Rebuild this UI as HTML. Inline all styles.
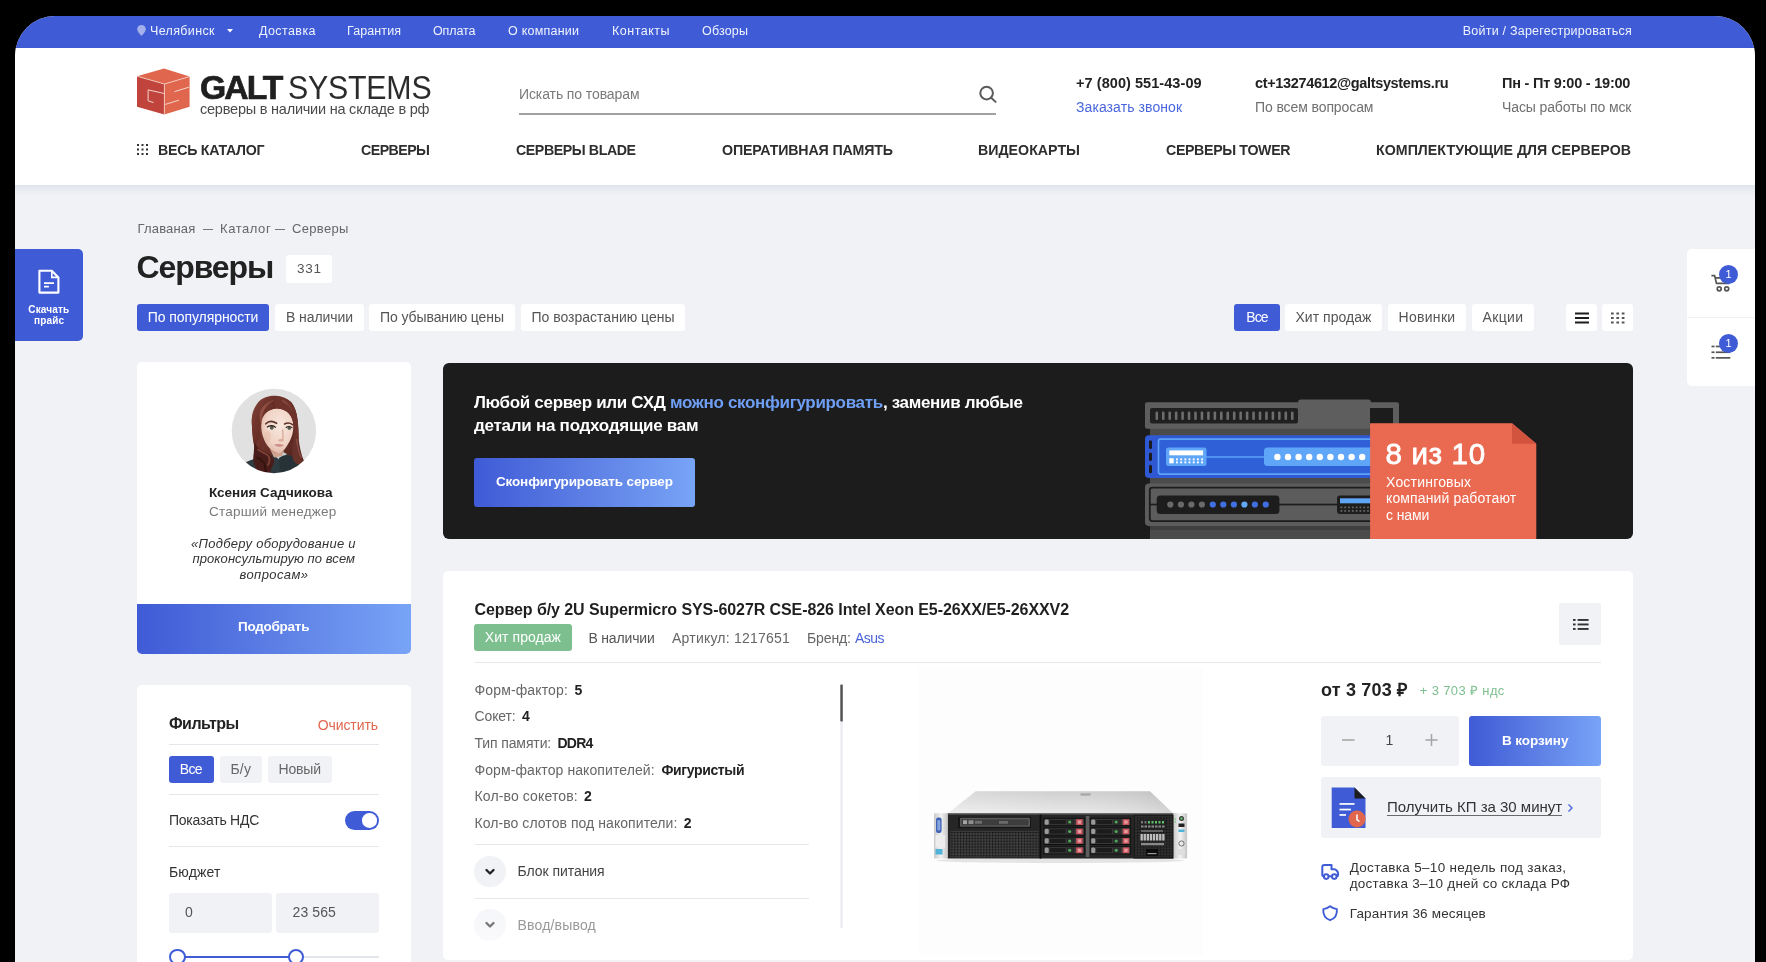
<!DOCTYPE html>
<html lang="ru">
<head>
<meta charset="utf-8">
<title>Серверы — Galt Systems</title>
<style>
*{box-sizing:border-box;margin:0;padding:0}
html,body{width:1766px;height:962px;overflow:hidden;background:#000}
body{font-family:"Liberation Sans",sans-serif;color:#222;position:relative}
#page{position:absolute;left:15px;top:16px;width:1740px;height:946px;background:#f1f2f6;border-radius:40px 40px 0 0;overflow:hidden}
#in{position:absolute;left:-15px;top:-16px;width:1766px;height:962px;will-change:transform}
.a{position:absolute}
.t{position:absolute;white-space:nowrap;line-height:1}
.b{font-weight:bold}
/* top bar */
#topbar{left:0;top:0;width:1766px;height:48px;background:#3f5cd6}
#topbar .t{color:#f0f3fd;font-size:12.5px;top:25px}
/* header */
#header{left:0;top:48px;width:1766px;height:137px;background:#fff;box-shadow:0 3px 9px rgba(50,65,130,.11)}
.nav{font-weight:bold;font-size:14.200px;letter-spacing:.6px;color:#2e2e2e;top:143px}
.hb{font-weight:bold;font-size:14.5px;color:#222;top:76px}
.hs{font-size:14px;color:#707070;top:100.200px}
/* generic */
.card{background:#fff;border-radius:5px}
.pill{position:absolute;height:27.500px;top:303.600px;background:#fff;border-radius:3px;font-size:14px;color:#555;text-align:center;line-height:27px;white-space:nowrap}
.pill.on{background:#3f5cd6;color:#fff}
.grad{background:linear-gradient(90deg,#3f5bd6 0%,#5f82e6 55%,#78a4f7 100%)}
.hr{position:absolute;height:1px;background:#e6e7ec}
/*FIT*/
#tb1{letter-spacing:0.35px}
#tb2{letter-spacing:0.40px}
#tb3{letter-spacing:0.10px}
#tb4{letter-spacing:-0.10px}
#tb5{letter-spacing:0.23px}
#tb6{letter-spacing:0.50px}
#tb7{letter-spacing:0.18px}
#tb8{letter-spacing:0.23px}
#n1{letter-spacing:-0.27px}
#n2{letter-spacing:-0.54px}
#n3{letter-spacing:-0.42px}
#n4{letter-spacing:-0.15px}
#n5{letter-spacing:0.02px}
#n6{letter-spacing:-0.35px}
#n7{letter-spacing:0.04px}
#lg1{letter-spacing:-1.93px}
#lg2{letter-spacing:-0.23px}
#lg3{letter-spacing:-0.22px}
#srch{letter-spacing:-0.10px}
#ph{letter-spacing:0.06px}
#ph2{letter-spacing:0.08px}
#em{letter-spacing:-0.35px}
#em2{letter-spacing:-0.10px}
#wh{letter-spacing:-0.22px}
#wh2{letter-spacing:-0.12px}
#ttl{letter-spacing:-1.10px}
#cnt{letter-spacing:0.73px}
#p1{letter-spacing:-0.08px}
#p2{letter-spacing:-0.08px}
#p3{letter-spacing:-0.10px}
#p4{letter-spacing:-0.00px}
#p5{letter-spacing:-0.81px}
#p6{letter-spacing:0.04px}
#p7{letter-spacing:0.28px}
#p8{letter-spacing:0.34px}
#dl1{letter-spacing:0.17px}
#dl2{letter-spacing:0.14px}
#mg1{letter-spacing:-0.02px}
#mg2{letter-spacing:0.23px}
#mg3{letter-spacing:0.29px}
#mg4{letter-spacing:0.08px}
#mg5{letter-spacing:0.42px}
#mg6{letter-spacing:-0.27px}
#bn1{letter-spacing:-0.32px}
#bn2{letter-spacing:-0.26px}
#bn3{letter-spacing:-0.15px}
#rn1{letter-spacing:0.66px}
#rn2{letter-spacing:0.20px}
#rn3{letter-spacing:0.13px}
#rn4{letter-spacing:-0.13px}
#pt{letter-spacing:-0.08px}
#pb1{letter-spacing:0.06px}
#pb2{letter-spacing:-0.16px}
#pb3{letter-spacing:0.22px}
#pb4{letter-spacing:-0.09px}
#pb5{letter-spacing:-0.58px}
#s1{letter-spacing:0.14px}
#s2{letter-spacing:-0.12px}
#s3{letter-spacing:-0.12px}
#s4{letter-spacing:0.09px}
#s5{letter-spacing:0.13px}
#s6{letter-spacing:0.06px}
#s3v{letter-spacing:-0.74px}
#s4v{letter-spacing:-0.36px}
#ac1{letter-spacing:-0.05px}
#ac2{letter-spacing:0.18px}
#pr1{letter-spacing:0.18px}
#pr2{letter-spacing:0.37px}
#cb{letter-spacing:-0.08px}
#kp{letter-spacing:-0.01px}
#dv1{letter-spacing:0.31px}
#dv2{letter-spacing:0.25px}
#gr{letter-spacing:0.16px}
#f1{letter-spacing:-0.54px}
#f2{letter-spacing:-0.08px}
#f3{letter-spacing:-0.66px}
#f4{letter-spacing:0.16px}
#f5{letter-spacing:-0.18px}
#f6{letter-spacing:-0.26px}
#f7{letter-spacing:0.13px}
#f9{letter-spacing:0.11px}
#bc1{letter-spacing:0.17px}
#bc2{letter-spacing:0.56px}
#bc3{letter-spacing:0.33px}
/*ENDFIT*/
</style>
</head>
<body>
<div id="page"><div id="in">

<!-- TOP BAR -->
<div id="topbar" class="a">
  <svg class="a" style="left:137px;top:25px" width="9" height="11" viewBox="0 0 9 11"><path d="M4.5 0C2 0 .2 1.9.2 4.2c0 2.600 2.600 4.800 4.300 6.600 1.700-1.800 4.300-4 4.300-6.600C8.800 1.900 7 0 4.500 0z" fill="#a3b0ec"/></svg>
  <span id="tb1" class="t" style="left:150px">Челябинск</span>
  <svg class="a" style="left:227px;top:29px" width="6" height="4" viewBox="0 0 6 4"><path d="M0 0h6L3 3.600z" fill="#fff"/></svg>
  <span id="tb2" class="t" style="left:259px">Доставка</span>
  <span id="tb3" class="t" style="left:347px">Гарантия</span>
  <span id="tb4" class="t" style="left:433px">Оплата</span>
  <span id="tb5" class="t" style="left:508px">О компании</span>
  <span id="tb6" class="t" style="left:612px">Контакты</span>
  <span id="tb7" class="t" style="left:702px">Обзоры</span>
  <span id="tb8" class="t" style="right:134px">Войти / Зарегестрироваться</span>
</div>

<!-- HEADER -->
<div id="header" class="a"></div>
<!-- logo -->
<svg class="a" style="left:136px;top:67px" width="55" height="49" viewBox="136 67 55 49">
  <polygon points="164,68.600 189.600,76.600 164.400,84 137,76.200" fill="#e0674e"/>
  <polygon points="137,76.200 164.400,84 164.400,114.600 137,106.800" fill="#c0443b"/>
  <polygon points="164.400,84 189.600,76.600 189.600,106.800 164.400,114.600" fill="#e0674e"/>
  <path d="M137,76.200 L164.400,84 L189.600,76.600 M164.400,84 V114.600" fill="none" stroke="#f6d5cd" stroke-width=".8"/>
  <path d="M164.400,93.500 L148.100,89.900 V100.800 L153.600,102.600" fill="none" stroke="#f6d5cd" stroke-width="1"/>
  <path d="M188.900,87.200 L174.400,91.700 M165.300,104.400 L178.900,100.200" fill="none" stroke="#f6d5cd" stroke-width="1"/>
</svg>
<span id="lg1" class="t b" style="left:200px;top:71.400px;font-size:33.700px;color:#1f1f1f;-webkit-text-stroke:.7px #1f1f1f">GALT</span>
<span id="lg2" class="t" style="left:287.500px;top:71.400px;font-size:33.700px;color:#2b2b2b;transform:scaleX(.9);transform-origin:0 0">SYSTEMS</span>
<span id="lg3" class="t" style="left:200px;top:101.900px;font-size:14.500px;color:#4a4a4a">серверы в наличии на складе в рф</span>
<!-- search -->
<span id="srch" class="t" style="left:519px;top:87px;font-size:14px;color:#7a7a7a">Искать по товарам</span>
<svg class="a" style="left:519px;top:80px" width="480" height="40" viewBox="519 80 480 40"><rect x="519" y="113.200" width="477" height="1.600" fill="#8a8a8a"/><circle cx="986.600" cy="93.100" r="6.300" fill="none" stroke="#5a5a5a" stroke-width="2"/><path d="M991.200 97.700L995.600 101.900" stroke="#5a5a5a" stroke-width="2" stroke-linecap="round"/></svg>
<!-- contacts -->
<span id="ph" class="t hb" style="left:1076px">+7 (800) 551-43-09</span>
<span id="ph2" class="t hs" style="left:1076px;color:#4a66dc">Заказать звонок</span>
<span id="em" class="t hb" style="left:1255px">ct+13274612@galtsystems.ru</span>
<span id="em2" class="t hs" style="left:1255px">По всем вопросам</span>
<span id="wh" class="t hb" style="left:1502px">Пн - Пт 9:00 - 19:00</span>
<span id="wh2" class="t hs" style="left:1502px">Часы работы по мск</span>
<!-- nav -->
<svg class="a" style="left:137px;top:144px" width="12" height="12" viewBox="0 0 12 12" fill="#333"><rect x="0" y="0" width="2" height="2"/><rect x="4.500" y="0" width="2" height="2"/><rect x="9" y="0" width="2" height="2"/><rect x="0" y="4.500" width="2" height="2"/><rect x="4.500" y="4.500" width="2" height="2"/><rect x="9" y="4.500" width="2" height="2"/><rect x="0" y="9" width="2" height="2"/><rect x="4.500" y="9" width="2" height="2"/><rect x="9" y="9" width="2" height="2"/></svg>
<span id="n1" class="t nav" style="left:158px">ВЕСЬ КАТАЛОГ</span>
<span id="n2" class="t nav" style="left:361px">СЕРВЕРЫ</span>
<span id="n3" class="t nav" style="left:516px">СЕРВЕРЫ BLADE</span>
<span id="n4" class="t nav" style="left:722px">ОПЕРАТИВНАЯ ПАМЯТЬ</span>
<span id="n5" class="t nav" style="left:978px">ВИДЕОКАРТЫ</span>
<span id="n6" class="t nav" style="left:1166px">СЕРВЕРЫ TOWER</span>
<span id="n7" class="t nav" style="left:1376px">КОМПЛЕКТУЮЩИЕ ДЛЯ СЕРВЕРОВ</span>

<!-- BREADCRUMB / TITLE / SORT -->
<span id="bc1" class="t" style="left:137.500px;top:222px;font-size:13px;color:#666">Главаная</span>
<div class="a" style="left:203px;top:228.500px;width:9.700px;height:1.200px;background:#777"></div>
<span id="bc2" class="t" style="left:220px;top:222px;font-size:13px;color:#666">Каталог</span>
<div class="a" style="left:274.900px;top:228.500px;width:10px;height:1.200px;background:#777"></div>
<span id="bc3" class="t" style="left:292px;top:222px;font-size:13px;color:#666">Серверы</span>
<span id="ttl" class="t b" style="left:136.500px;top:251.300px;font-size:32px;color:#222">Серверы</span>
<div class="a" style="left:286px;top:255px;width:46px;height:28px;background:#fff;border-radius:3px"></div>
<span id="cnt" class="t" style="left:297px;top:262px;font-size:13.500px;color:#555">331</span>

<div class="pill on" style="left:137px;width:132px"><span id="p1">По популярности</span></div>
<div class="pill" style="left:275px;width:89px"><span id="p2">В наличии</span></div>
<div class="pill" style="left:369px;width:146px"><span id="p3">По убыванию цены</span></div>
<div class="pill" style="left:521px;width:164px"><span id="p4">По возрастанию цены</span></div>

<div class="pill on" style="left:1234px;width:46px"><span id="p5">Все</span></div>
<div class="pill" style="left:1285px;width:97px"><span id="p6">Хит продаж</span></div>
<div class="pill" style="left:1388px;width:78px"><span id="p7">Новинки</span></div>
<div class="pill" style="left:1472px;width:62px"><span id="p8">Акции</span></div>
<div class="pill" style="left:1566px;width:30.500px"></div>
<div class="pill" style="left:1602px;width:30.500px"></div>
<svg class="a" style="left:1574.600px;top:311.800px" width="14" height="12" viewBox="0 0 14 12" fill="#1d1d1d"><rect x="0" y="0.500" width="14" height="2"/><rect x="0" y="5" width="14" height="2"/><rect x="0" y="9.500" width="14" height="2"/></svg>
<svg class="a" style="left:1611px;top:311.800px" width="14" height="12" viewBox="0 0 13 12" preserveAspectRatio="none" fill="#555"><rect x="0" y="0.500" width="2.500" height="2"/><rect x="5" y="0.500" width="2.500" height="2"/><rect x="10" y="0.500" width="2.500" height="2"/><rect x="0" y="5" width="2.500" height="2"/><rect x="5" y="5" width="2.500" height="2"/><rect x="10" y="5" width="2.500" height="2"/><rect x="0" y="9.500" width="2.500" height="2"/><rect x="5" y="9.500" width="2.500" height="2"/><rect x="10" y="9.500" width="2.500" height="2"/></svg>

<!-- LEFT FLOAT -->
<div class="a" style="left:15px;top:249px;width:68px;height:91.600px;background:#3f5cd6;border-radius:0 5px 5px 0"></div>
<svg class="a" style="left:36px;top:267px" width="26" height="30" viewBox="36 267 26 30"><path d="M39.400 270.800H51.800L58.400 277.400V292.600H39.400Z" fill="none" stroke="#fff" stroke-width="2.100" stroke-linejoin="round"/><path d="M51.800 271.500V277.400H57.800" fill="none" stroke="#fff" stroke-width="1.600"/><path d="M44 283.200H54M44 286.700H48.900" stroke="#fff" stroke-width="1.700"/></svg>
<span id="dl1" class="t b" style="left:28.300px;top:305px;font-size:10px;color:#fff">Скачать</span>
<span id="dl2" class="t b" style="left:34px;top:316px;font-size:10px;color:#fff">прайс</span>

<!-- RIGHT FLOAT -->
<div class="a" style="left:1687px;top:249.300px;width:68px;height:137px;background:#fff;border-radius:5px 0 0 5px"></div>
<div class="a" style="left:1687px;top:317.200px;width:68px;height:1px;background:#f1f2f6"></div>
<svg class="a" style="left:1708px;top:270px" width="26" height="24" viewBox="1708 270 26 24" fill="none" stroke="#555" stroke-width="1.700"><path d="M1711.400 275.600H1714.600L1716.500 283.400H1728.800L1730 277.800H1715.200"/><circle cx="1719.200" cy="288.800" r="2"/><circle cx="1726.700" cy="288.800" r="2"/></svg>
<div class="a" style="left:1719px;top:265px;width:19px;height:19px;border-radius:50%;background:#3f5cd6"></div>
<span class="t" style="left:1725.500px;top:269px;font-size:11px;color:#fff">1</span>
<svg class="a" style="left:1710px;top:344px" width="22" height="16" viewBox="1710 344 22 16" fill="#555"><rect x="1711.500" y="345.600" width="3" height="1.700"/><rect x="1715.800" y="345.600" width="14.500" height="1.700"/><rect x="1711.500" y="351.400" width="3" height="1.700"/><rect x="1715.800" y="351.400" width="14.500" height="1.700"/><rect x="1711.500" y="357" width="3" height="1.700"/><rect x="1715.800" y="357" width="14.500" height="1.700"/></svg>
<div class="a" style="left:1719px;top:334px;width:19px;height:19px;border-radius:50%;background:#3f5cd6"></div>
<span class="t" style="left:1725.500px;top:338px;font-size:11px;color:#fff">1</span>

<!-- MANAGER CARD -->
<div class="a card" style="left:137px;top:362px;width:274px;height:292px;overflow:hidden">
  <div class="a grad" style="left:0;top:242px;width:274px;height:50px"></div>
</div>
<svg class="a" style="left:224px;top:382px" width="100" height="100" viewBox="0 0 100 100">
  <defs>
    <clipPath id="avc"><circle cx="49.900" cy="49" r="42.200"/></clipPath>
    <filter id="avb" x="-10%" y="-10%" width="120%" height="120%"><feGaussianBlur stdDeviation=".75"/></filter>
    <radialGradient id="skin" cx=".58" cy=".38" r=".75"><stop offset="0" stop-color="#f8e6dc"/><stop offset=".6" stop-color="#f0d3c5"/><stop offset="1" stop-color="#d7a896"/></radialGradient>
    <linearGradient id="hair" x1="0" y1="0" x2="1" y2="1"><stop offset="0" stop-color="#83443a"/><stop offset=".45" stop-color="#6a3029"/><stop offset="1" stop-color="#4c211d"/></linearGradient>
  </defs>
  <circle cx="49.900" cy="49" r="42.200" fill="#e1e1e1"/>
  <g clip-path="url(#avc)"><g filter="url(#avb)">
    <!-- hair mass -->
    <path d="M53.500 14C46 13 38 15.500 34 20.500 29 27 27.500 33 27.800 40 28 46 28.200 50 28.500 54 29 60 30.500 64 30.600 68 30 72 29 76 29.500 79 31 84 38 88 44 92H62C68 90 76 84 79.800 78.700 77 72 75.500 64 74.700 58 74.500 50 74.500 44 73.500 37.500 72.500 30 70.500 24 67.300 20.300 63.500 16.500 58.500 14.500 53.500 14Z" fill="url(#hair)"/>
    <!-- clothing -->
    <path d="M20 81C28 77 38 74 48 73L56 70 66 74C72 77 76 80 79 84L70 94H28Z" fill="#2f3b40"/>
    <path d="M49 73L57 69 63 72 56 78Z" fill="#c9cdcd"/>
    <path d="M55 76C60 72 66 72 71 76L75 82 68 92H56Z" fill="#273339"/>
    <!-- face -->
    <path d="M52.400 26.600C45 26.800 39.500 31 37.500 39.800 36.800 45 37.500 49.500 38.600 53.500 40 58.500 42.500 62.800 45.500 66 48 69 51.500 71.500 54.700 71.200 58.500 70.500 61.500 66.800 63.800 62.600 66.500 58 68.500 53.500 69 49 69.600 45 69.400 41 68.400 37.500 66 30.500 60 26.500 52.400 26.600Z" fill="url(#skin)"/>
    <path d="M45.500 66C48 69 51.500 71.500 54.700 71.200 57 70.800 59 69.300 60.500 67.500L58 74 50 75.500Z" fill="#d2a28f"/>
    <!-- front hair, with centre part -->
    <path d="M53.500 14C45 13.500 37 17 33 23 29 29 27.500 36 27.800 42 28.200 50 29.500 58 30.600 66 32.500 62 34.500 58.500 36.500 55 35.500 49.500 35.500 44 37 39 39 32.500 44 27.500 52.400 26.600 50.500 22 51 18 53.500 14Z" fill="url(#hair)"/>
    <path d="M53.500 14C58 14.500 63.500 17 67.300 20.300 71 25 73 31 73.500 37.500 74.300 44 74.500 51 74.700 58 73.500 62 71.500 65 69 67 70.200 61 70.400 55 69.800 49 69.800 43 69 38.500 67 34.500 64 29.500 59 26.800 52.400 26.600 52 22.500 52.300 18 53.500 14Z" fill="#6d322a"/>
    <path d="M36 30C38.500 23.500 44 19 51 17.500 45 20.500 41 25 39 31 37.800 35 37.300 39 37.500 43 35.800 39 35.300 34.500 36 30Z" fill="#9a5a4b" opacity=".75"/>
    <path d="M58 17.500C63 19.500 67 24 69 30 67 26 63.500 22 58.500 20Z" fill="#96564a" opacity=".6"/>
    <!-- curls -->
    <path d="M30.600 60C32 64 35 67 39 69 43 71 47.500 72.500 49.500 76 51 80 49 84 47 87 46 89.500 47 91 49 92.500H38C33 89 30 84 29.500 78.700 29.300 72 30.300 66 30.600 60Z" fill="#4a1f1b"/>
    <path d="M33.500 67C36.500 70 41.500 71 44.500 74 46.500 77 45.500 80.500 43.500 83.500" stroke="#8b4a3c" stroke-width="1.700" fill="none" opacity=".85"/>
    <path d="M32.500 75C35.500 77 38.500 78.500 40.500 81.500 41.500 84.500 40.500 87.500 42.500 90.500" stroke="#2a0f0c" stroke-width="1.900" fill="none" opacity=".8"/>
    <path d="M71 46C72.500 56 73.500 66 76 73 77.500 77 79 79 79.500 80.500 75.500 83.500 71.500 82.500 69.500 78.500 67.500 72.500 68 64.500 69.500 57Z" fill="#66302a"/>
    <path d="M72.500 57C73.500 64 74.500 70 77.500 76" stroke="#9a5c4e" stroke-width="1.400" fill="none" opacity=".7"/>
    <!-- brows & eyes -->
    <path d="M41.800 41.800C44.500 39 48.500 38.800 52.600 41.300" stroke="#5b3329" stroke-width="1.600" fill="none" stroke-linecap="round"/>
    <path d="M60.600 42C63 40.600 66 40.800 68.600 42.600" stroke="#5b3329" stroke-width="1.500" fill="none" stroke-linecap="round"/>
    <ellipse cx="47.300" cy="45.700" rx="4" ry="2" fill="#f2ebe6"/>
    <ellipse cx="65" cy="46.200" rx="3.200" ry="1.800" fill="#f2ebe6"/>
    <circle cx="47.800" cy="45.700" r="2" fill="#5a5a4c"/>
    <circle cx="65.300" cy="46.200" r="1.800" fill="#5a5a4c"/>
    <path d="M43 45.300C45.500 43 49.500 43 51.800 45.600" stroke="#2e1d18" stroke-width="1.200" fill="none"/>
    <path d="M61.800 45.800C63.600 44 66.600 44 68.400 46" stroke="#2e1d18" stroke-width="1.100" fill="none"/>
    <!-- nose -->
    <path d="M58.600 47.500C59 51.500 59.400 55 58.600 58" stroke="#d7aa98" stroke-width="1.300" fill="none"/>
    <ellipse cx="57" cy="58.300" rx="3" ry="1.400" fill="#dcae9c"/>
    <!-- lips -->
    <path d="M50.200 62.800C52.500 61.600 56 61.800 60.200 63 58 65.400 53 65.600 50.200 62.800Z" fill="#cd8d86"/>
    <ellipse cx="43.500" cy="55" rx="3.500" ry="6" fill="#e4bcaa" opacity=".55"/>
  </g></g>
</svg>
<span id="mg1" class="t b" style="left:209px;top:485.500px;font-size:13.500px;color:#222">Ксения Садчикова</span>
<span id="mg2" class="t" style="left:209px;top:504.500px;font-size:13.500px;color:#7a7a7a">Старший менеджер</span>
<span id="mg3" class="t" style="left:191px;top:536.500px;font-size:13px;font-style:italic;color:#333">«Подберу оборудование и</span>
<span id="mg4" class="t" style="left:192.500px;top:552px;font-size:13px;font-style:italic;color:#333">проконсультирую по всем</span>
<span id="mg5" class="t" style="left:239.500px;top:568px;font-size:13px;font-style:italic;color:#333">вопросам»</span>
<span id="mg6" class="t b" style="left:238px;top:620px;font-size:13.500px;color:#fff">Подобрать</span>

<!-- BANNER -->
<div class="a" style="left:443px;top:363px;width:1190px;height:176px;background:#1c1c1c;border-radius:6px;overflow:hidden" id="banner"></div>
<span id="bn1" class="t b" style="left:474px;top:393.500px;font-size:17px;color:#fff">Любой сервер или СХД <span style="color:#6f9ff5">можно сконфигурировать</span>, заменив любые</span>
<span id="bn2" class="t b" style="left:474px;top:417px;font-size:17px;color:#fff">детали на подходящие вам</span>
<div class="a grad" style="left:474px;top:457.500px;width:221px;height:49.500px;border-radius:3px"></div>
<span id="bn3" class="t b" style="left:496px;top:475.200px;font-size:13.500px;color:#fff">Сконфигурировать сервер</span>

<svg class="a" style="left:1140px;top:363.500px" width="493" height="175" viewBox="1140 363.500 493 175">
  <defs><clipPath id="bnc"><rect x="1140" y="363.500" width="493" height="175"/></clipPath></defs>
  <g clip-path="url(#bnc)">
  <!-- base -->
  <rect x="1150" y="425" width="221" height="120" fill="#4b4b4b"/>
  <rect x="1150" y="525.500" width="221" height="4" fill="#3f3f3f"/>
  <!-- top unit -->
  <rect x="1298" y="399" width="73" height="10" rx="3" fill="#5e5e5e"/>
  <rect x="1145" y="401.800" width="254" height="26.500" rx="2" fill="#5e5e5e"/>
  <rect x="1150" y="407.500" width="148" height="15.500" rx="2" fill="#202020"/>
  <rect x="1155.50" y="411" width="2.600" height="8.500" rx="1.200" fill="#6d6d6d"/><rect x="1161.95" y="411" width="2.600" height="8.500" rx="1.200" fill="#6d6d6d"/><rect x="1168.40" y="411" width="2.600" height="8.500" rx="1.200" fill="#6d6d6d"/><rect x="1174.85" y="411" width="2.600" height="8.500" rx="1.200" fill="#6d6d6d"/><rect x="1181.30" y="411" width="2.600" height="8.500" rx="1.200" fill="#6d6d6d"/><rect x="1187.75" y="411" width="2.600" height="8.500" rx="1.200" fill="#6d6d6d"/><rect x="1194.20" y="411" width="2.600" height="8.500" rx="1.200" fill="#6d6d6d"/><rect x="1200.65" y="411" width="2.600" height="8.500" rx="1.200" fill="#6d6d6d"/><rect x="1207.10" y="411" width="2.600" height="8.500" rx="1.200" fill="#6d6d6d"/><rect x="1213.55" y="411" width="2.600" height="8.500" rx="1.200" fill="#6d6d6d"/><rect x="1220.00" y="411" width="2.600" height="8.500" rx="1.200" fill="#6d6d6d"/><rect x="1226.45" y="411" width="2.600" height="8.500" rx="1.200" fill="#6d6d6d"/><rect x="1232.90" y="411" width="2.600" height="8.500" rx="1.200" fill="#6d6d6d"/><rect x="1239.35" y="411" width="2.600" height="8.500" rx="1.200" fill="#6d6d6d"/><rect x="1245.80" y="411" width="2.600" height="8.500" rx="1.200" fill="#6d6d6d"/><rect x="1252.25" y="411" width="2.600" height="8.500" rx="1.200" fill="#6d6d6d"/><rect x="1258.70" y="411" width="2.600" height="8.500" rx="1.200" fill="#6d6d6d"/><rect x="1265.15" y="411" width="2.600" height="8.500" rx="1.200" fill="#6d6d6d"/><rect x="1271.60" y="411" width="2.600" height="8.500" rx="1.200" fill="#6d6d6d"/><rect x="1278.05" y="411" width="2.600" height="8.500" rx="1.200" fill="#6d6d6d"/><rect x="1284.50" y="411" width="2.600" height="8.500" rx="1.200" fill="#6d6d6d"/><rect x="1290.95" y="411" width="2.600" height="8.500" rx="1.200" fill="#6d6d6d"/>
  <rect x="1370" y="407.500" width="23" height="16" fill="#1c1c1c"/>
  <!-- blue unit -->
  <rect x="1145" y="434.700" width="240" height="42.800" rx="4" fill="#2f59d4"/>
  <rect x="1149" y="439.800" width="3" height="8.600" rx="1.500" fill="#1b1b1b"/><rect x="1149" y="452" width="3" height="8.600" rx="1.500" fill="#1b1b1b"/><rect x="1149" y="464.200" width="3" height="8.600" rx="1.500" fill="#1b1b1b"/>
  <rect x="1158.500" y="438.600" width="230" height="35" rx="2" fill="#3060d8" stroke="#5fa3f8" stroke-width="1.600"/>
  <rect x="1166" y="447" width="40.500" height="18.500" rx="2.500" fill="#5fa6f8"/>
  <rect x="1169.300" y="449.900" width="33.800" height="4.900" fill="#fff"/>
  <rect x="1169.300" y="457.700" width="4.400" height="5.100" fill="#fff"/>
  <rect x="1176.00" y="457.9" width="1.900" height="1.900" fill="#fff"/><rect x="1176.00" y="460.9" width="1.900" height="1.900" fill="#fff"/><rect x="1180.19" y="457.9" width="1.900" height="1.900" fill="#fff"/><rect x="1180.19" y="460.9" width="1.900" height="1.900" fill="#fff"/><rect x="1184.38" y="457.9" width="1.900" height="1.900" fill="#fff"/><rect x="1184.38" y="460.9" width="1.900" height="1.900" fill="#fff"/><rect x="1188.57" y="457.9" width="1.900" height="1.900" fill="#fff"/><rect x="1188.57" y="460.9" width="1.900" height="1.900" fill="#fff"/><rect x="1192.76" y="457.9" width="1.900" height="1.900" fill="#fff"/><rect x="1192.76" y="460.9" width="1.900" height="1.900" fill="#fff"/><rect x="1196.95" y="457.9" width="1.900" height="1.900" fill="#fff"/><rect x="1196.95" y="460.9" width="1.900" height="1.900" fill="#fff"/><rect x="1201.14" y="457.9" width="1.900" height="1.900" fill="#fff"/><rect x="1201.14" y="460.9" width="1.900" height="1.900" fill="#fff"/>
  <rect x="1206" y="455.800" width="58" height="1.400" fill="#5fa6f8"/>
  <rect x="1264" y="447" width="120" height="18.500" rx="3.500" fill="#5fa6f8"/>
  <circle cx="1277.4" cy="456.500" r="3.200" fill="#fff"/><circle cx="1288.0" cy="456.500" r="3.200" fill="#fff"/><circle cx="1298.6" cy="456.500" r="3.200" fill="#fff"/><circle cx="1309.2" cy="456.500" r="3.200" fill="#fff"/><circle cx="1319.8" cy="456.500" r="3.200" fill="#fff"/><circle cx="1330.4" cy="456.500" r="3.200" fill="#fff"/><circle cx="1341.0" cy="456.500" r="3.200" fill="#fff"/><circle cx="1351.6" cy="456.500" r="3.200" fill="#fff"/><circle cx="1362.2" cy="456.500" r="3.200" fill="#fff"/>
  <!-- dark unit -->
  <rect x="1145" y="483" width="240" height="42.500" rx="4" fill="#5c5c5c"/>
  <rect x="1149.800" y="487.200" width="236" height="33.400" rx="2.500" fill="none" stroke="#1c1c1c" stroke-width="1.800"/>
  <rect x="1150" y="503.200" width="200" height="1.700" fill="#1c1c1c"/>
  <rect x="1156.700" y="495" width="122.700" height="18.600" rx="3.500" fill="#1d1d1d"/>
  <circle cx="1170.3" cy="504" r="3.100" fill="#6a6a6a"/><circle cx="1180.9" cy="504" r="3.100" fill="#6a6a6a"/><circle cx="1191.4" cy="504" r="3.100" fill="#6a6a6a"/><circle cx="1201.9" cy="504" r="3.100" fill="#6a6a6a"/><circle cx="1212.8" cy="504" r="3.100" fill="#3f6fe0"/><circle cx="1223.3" cy="504" r="3.100" fill="#3f6fe0"/><circle cx="1233.9" cy="504" r="3.100" fill="#3f6fe0"/><circle cx="1244.4" cy="504" r="3.100" fill="#62a6f7"/><circle cx="1254.9" cy="504" r="3.100" fill="#3f6fe0"/><circle cx="1265.8" cy="504" r="3.100" fill="#3f6fe0"/>
  <rect x="1337" y="495" width="40" height="18.600" rx="3" fill="#1d1d1d"/>
  <rect x="1340" y="497.800" width="35" height="5" fill="#5fa6f8"/>
  <rect x="1340.5" y="506" width="1.800" height="1.800" fill="#666"/><rect x="1340.5" y="509.5" width="1.800" height="1.800" fill="#666"/><rect x="1344.3" y="506" width="1.800" height="1.800" fill="#666"/><rect x="1344.3" y="509.5" width="1.800" height="1.800" fill="#666"/><rect x="1348.1" y="506" width="1.800" height="1.800" fill="#666"/><rect x="1348.1" y="509.5" width="1.800" height="1.800" fill="#666"/><rect x="1351.9" y="506" width="1.800" height="1.800" fill="#666"/><rect x="1351.9" y="509.5" width="1.800" height="1.800" fill="#666"/><rect x="1355.7" y="506" width="1.800" height="1.800" fill="#666"/><rect x="1355.7" y="509.5" width="1.800" height="1.800" fill="#666"/><rect x="1359.5" y="506" width="1.800" height="1.800" fill="#666"/><rect x="1359.5" y="509.5" width="1.800" height="1.800" fill="#666"/><rect x="1363.3" y="506" width="1.800" height="1.800" fill="#666"/><rect x="1363.3" y="509.5" width="1.800" height="1.800" fill="#666"/><rect x="1367.1" y="506" width="1.800" height="1.800" fill="#666"/><rect x="1367.1" y="509.5" width="1.800" height="1.800" fill="#666"/>
  <!-- red note -->
  <polygon points="1370.100,422.700 1512,422.700 1536.300,443.300 1536.300,540 1370.100,540" fill="#ea6a51"/>
  <polygon points="1512,422.700 1536.300,443.300 1512,443.300" fill="#d2543f"/>
  </g>
</svg>
<span id="rn1" class="t" style="left:1385.500px;top:438.600px;font-size:29.500px;color:#fff;-webkit-text-stroke:.8px #fff">8 из 10</span>
<span id="rn2" class="t" style="left:1386px;top:475px;font-size:14px;color:#fff">Хостинговых</span>
<span id="rn3" class="t" style="left:1386px;top:491px;font-size:14px;color:#fff">компаний работают</span>
<span id="rn4" class="t" style="left:1386px;top:507.500px;font-size:14px;color:#fff">с нами</span>

<!-- PRODUCT CARD -->
<div class="a card" style="left:443px;top:571px;width:1190px;height:389px"></div>
<span id="pt" class="t b" style="left:474.500px;top:601.700px;font-size:16px;color:#1f1f1f">Сервер б/у 2U Supermicro SYS-6027R CSE-826 Intel Xeon E5-26XX/E5-26XXV2</span>
<div class="a" style="left:474px;top:624px;width:98px;height:27px;background:#7dbf8f;border-radius:3px"></div>
<span id="pb1" class="t" style="left:484.800px;top:630px;font-size:14px;color:#fff">Хит продаж</span>
<span id="pb2" class="t" style="left:588.400px;top:631px;font-size:14px;color:#555">В наличии</span>
<span id="pb3" class="t" style="left:672px;top:631px;font-size:14px;color:#666">Артикул: 1217651</span>
<span id="pb4" class="t" style="left:806.900px;top:631px;font-size:14px;color:#666">Бренд:</span>
<span id="pb5" class="t" style="left:855px;top:631px;font-size:14px;color:#4a63d9">Asus</span>
<div class="hr" style="left:474.500px;top:662px;width:1126.500px"></div>
<span id="s1" class="t" style="left:474.500px;top:683.2px;font-size:14px;color:#666">Форм-фактор:</span><span id="s1v" class="t b" style="left:574.5px;top:683.2px;font-size:14px;color:#222">5</span>
<span id="s2" class="t" style="left:474.500px;top:709.3px;font-size:14px;color:#666">Сокет:</span><span id="s2v" class="t b" style="left:522px;top:709.3px;font-size:14px;color:#222">4</span>
<span id="s3" class="t" style="left:474.500px;top:735.8px;font-size:14px;color:#666">Тип памяти:</span><span id="s3v" class="t b" style="left:557.4px;top:735.8px;font-size:14px;color:#222">DDR4</span>
<span id="s4" class="t" style="left:474.500px;top:762.7px;font-size:14px;color:#666">Форм-фактор накопителей:</span><span id="s4v" class="t b" style="left:661.4px;top:762.7px;font-size:14px;color:#222">Фигуристый</span>
<span id="s5" class="t" style="left:474.500px;top:789.2px;font-size:14px;color:#666">Кол-во сокетов:</span><span id="s5v" class="t b" style="left:583.9px;top:789.2px;font-size:14px;color:#222">2</span>
<span id="s6" class="t" style="left:474.500px;top:815.7px;font-size:14px;color:#666">Кол-во слотов под накопители:</span><span id="s6v" class="t b" style="left:683.8px;top:815.7px;font-size:14px;color:#222">2</span>

<div class="hr" style="left:474.500px;top:843.500px;width:334.500px"></div>
<div class="a" style="left:474.400px;top:855.600px;width:31.400px;height:31.400px;border-radius:50%;background:#f1f2f6"></div>
<svg class="a" style="left:485px;top:867.500px" width="10" height="8" viewBox="0 0 10 8"><path d="M1.500 2L5 5.500 8.500 2" fill="none" stroke="#222" stroke-width="2.300" stroke-linecap="round" stroke-linejoin="round"/></svg>
<span id="ac1" class="t" style="left:517.500px;top:864px;font-size:14px;color:#444">Блок питания</span>
<div class="hr" style="left:474.500px;top:897.700px;width:334.500px"></div>
<div class="a" style="left:474.400px;top:909.300px;width:31.400px;height:31.400px;border-radius:50%;background:linear-gradient(#f5f6f9,#fafafc)"></div>
<svg class="a" style="left:485px;top:921.200px" width="10" height="8" viewBox="0 0 10 8"><path d="M1.500 2L5 5.500 8.500 2" fill="none" stroke="#777" stroke-width="2.300" stroke-linecap="round" stroke-linejoin="round"/></svg>
<span id="ac2" class="t" style="left:517.500px;top:917.700px;font-size:14px;color:#999">Ввод/вывод</span>
<svg class="a" style="left:838px;top:680px" width="8" height="252" viewBox="838 680 8 252"><rect x="840.300" y="685" width="2.500" height="243" fill="#ecedf2"/><rect x="840.300" y="684.600" width="2.500" height="37" rx=".8" fill="#555"/></svg>

<!-- product image -->
<div class="a" style="left:917.700px;top:667.800px;width:285px;height:287.200px;background:#fdfdfd"></div>
<svg id="srv" class="a" style="left:930px;top:785px" width="262" height="82" viewBox="930 785 262 82"><defs><linearGradient id="tg" x1="0" y1="0" x2="0" y2="1"><stop offset="0" stop-color="#cfcfcf"/><stop offset="1" stop-color="#e9e9e9"/></linearGradient><linearGradient id="eg" x1="0" y1="0" x2="1" y2="0"><stop offset="0" stop-color="#c9c9c9"/><stop offset=".5" stop-color="#f2f2f2"/><stop offset="1" stop-color="#c4c4c4"/></linearGradient><pattern id="vent" x="950.400" y="831" width="2.900" height="2.900" patternUnits="userSpaceOnUse"><rect width="2.900" height="2.900" fill="#505050"/><rect x=".5" y=".5" width="2" height="2" fill="#0e0e0e"/></pattern><linearGradient id="tg2" x1="0" y1="0" x2="1" y2="0"><stop offset="0" stop-color="#fff" stop-opacity=".25"/><stop offset=".5" stop-color="#fff" stop-opacity="0"/><stop offset="1" stop-color="#000" stop-opacity=".08"/></linearGradient><filter id="sb" x="-2%" y="-5%" width="104%" height="110%"><feGaussianBlur stdDeviation=".45"/></filter></defs><g filter="url(#sb)"><ellipse cx="1060" cy="860.500" rx="124" ry="2.500" fill="#e4e4e4"/><polygon points="975.700,791.200 1150,791.200 1173.500,813.800 947.500,813.800" fill="url(#tg)"/><polygon points="975.700,791.200 1150,791.200 1173.500,813.800 947.500,813.800" fill="url(#tg2)"/><rect x="1080.500" y="793.300" width="10" height="2.400" fill="#a9a9a9"/><rect x="947.500" y="813.500" width="226" height="45" fill="#262626"/><rect x="947.500" y="813.500" width="226" height="1.200" fill="#555"/><rect x="934" y="813.200" width="13.800" height="45.400" rx="1" fill="url(#eg)"/><rect x="1173.300" y="813.200" width="13.800" height="45.400" rx="1" fill="url(#eg)"/><rect x="936" y="817.500" width="5.600" height="15.500" rx="2.200" fill="#3f63b5"/><rect x="937.300" y="820" width="3" height="10.500" rx="1.300" fill="#86a4de"/><rect x="935.500" y="849" width="7" height="5.500" fill="#4fb3d9"/><rect x="935.500" y="835" width="9.500" height="12.500" fill="#ededed"/><circle cx="1181.500" cy="818.500" r="2.500" fill="#3a3a3a"/><circle cx="1181.500" cy="818.500" r="1.200" fill="#61c36a"/><rect x="1178.500" y="823.500" width="6" height="3.500" fill="#222"/><rect x="1178.500" y="829.500" width="6" height="2.500" fill="#4fb3d9"/><circle cx="1181.500" cy="843.500" r="2.600" fill="none" stroke="#555" stroke-width=".8"/><rect x="1178" y="849" width="7" height="6" fill="#dedede"/><circle cx="1175.300" cy="819" r=".7" fill="#61c36a"/><circle cx="1175.300" cy="822" r=".7" fill="#61c36a"/><rect x="958" y="816.800" width="73" height="11.500" rx="1" fill="#141414"/><rect x="960" y="817.800" width="70" height="9" rx=".8" fill="#5a5a5a"/><rect x="961.500" y="819.300" width="67" height="6" fill="#3c3c3c"/><rect x="963" y="820.300" width="4" height="3.800" fill="#a5a5a5"/><rect x="968.500" y="820.300" width="5" height="3.800" fill="#8d8d8d"/><rect x="975" y="820.800" width="7" height="3" fill="#6d6d6d"/><rect x="999" y="821" width="9" height="2.800" fill="#6a6a6a"/><rect x="950.400" y="831" width="88.600" height="26.200" fill="url(#vent)"/><rect x="1039.500" y="814.700" width="2" height="43.800" fill="#0f0f0f"/><rect x="1043.2" y="817.9" width="42" height="8.300" fill="#111"/><rect x="1044.2" y="818.9" width="40" height="6.300" fill="#3b3b3b"/><rect x="1044.7" y="819.4" width="4" height="5.300" rx="1.500" fill="#9a9a9a"/><rect x="1049.7" y="819.9" width="16" height="4.300" fill="#1c1c1c"/><rect x="1066.7" y="819.4" width="8" height="5.300" fill="#2b2b2b"/><circle cx="1069.7" cy="822.1" r="1.500" fill="#4fae5c"/><rect x="1076.2" y="819.1999999999999" width="6.500" height="5.800" fill="#c9545d"/><rect x="1077.8" y="820.5" width="3.300" height="3.200" fill="#e79aa0"/><rect x="1043.2" y="827.3" width="42" height="8.300" fill="#111"/><rect x="1044.2" y="828.3" width="40" height="6.300" fill="#3b3b3b"/><rect x="1044.7" y="828.8" width="4" height="5.300" rx="1.500" fill="#9a9a9a"/><rect x="1049.7" y="829.3" width="16" height="4.300" fill="#1c1c1c"/><rect x="1066.7" y="828.8" width="8" height="5.300" fill="#2b2b2b"/><circle cx="1069.7" cy="831.5" r="1.500" fill="#4fae5c"/><rect x="1076.2" y="828.5999999999999" width="6.500" height="5.800" fill="#c9545d"/><rect x="1077.8" y="829.9" width="3.300" height="3.200" fill="#e79aa0"/><rect x="1043.2" y="836.7" width="42" height="8.300" fill="#111"/><rect x="1044.2" y="837.7" width="40" height="6.300" fill="#3b3b3b"/><rect x="1044.7" y="838.2" width="4" height="5.300" rx="1.500" fill="#9a9a9a"/><rect x="1049.7" y="838.7" width="16" height="4.300" fill="#1c1c1c"/><rect x="1066.7" y="838.2" width="8" height="5.300" fill="#2b2b2b"/><circle cx="1069.7" cy="840.9000000000001" r="1.500" fill="#4fae5c"/><rect x="1076.2" y="838.0" width="6.500" height="5.800" fill="#c9545d"/><rect x="1077.8" y="839.3000000000001" width="3.300" height="3.200" fill="#e79aa0"/><rect x="1043.2" y="846.1" width="42" height="8.300" fill="#111"/><rect x="1044.2" y="847.1" width="40" height="6.300" fill="#3b3b3b"/><rect x="1044.7" y="847.6" width="4" height="5.300" rx="1.500" fill="#9a9a9a"/><rect x="1049.7" y="848.1" width="16" height="4.300" fill="#1c1c1c"/><rect x="1066.7" y="847.6" width="8" height="5.300" fill="#2b2b2b"/><circle cx="1069.7" cy="850.3000000000001" r="1.500" fill="#4fae5c"/><rect x="1076.2" y="847.4" width="6.500" height="5.800" fill="#c9545d"/><rect x="1077.8" y="848.7" width="3.300" height="3.200" fill="#e79aa0"/><rect x="1089.7" y="817.9" width="41.5" height="8.300" fill="#111"/><rect x="1090.7" y="818.9" width="39.5" height="6.300" fill="#3b3b3b"/><rect x="1091.2" y="819.4" width="4" height="5.300" rx="1.500" fill="#9a9a9a"/><rect x="1096.2" y="819.9" width="16" height="4.300" fill="#1c1c1c"/><rect x="1113.2" y="819.4" width="8" height="5.300" fill="#2b2b2b"/><circle cx="1116.2" cy="822.1" r="1.500" fill="#4fae5c"/><rect x="1122.7" y="819.1999999999999" width="6.500" height="5.800" fill="#c9545d"/><rect x="1124.3" y="820.5" width="3.300" height="3.200" fill="#e79aa0"/><rect x="1089.7" y="827.3" width="41.5" height="8.300" fill="#111"/><rect x="1090.7" y="828.3" width="39.5" height="6.300" fill="#3b3b3b"/><rect x="1091.2" y="828.8" width="4" height="5.300" rx="1.500" fill="#9a9a9a"/><rect x="1096.2" y="829.3" width="16" height="4.300" fill="#1c1c1c"/><rect x="1113.2" y="828.8" width="8" height="5.300" fill="#2b2b2b"/><circle cx="1116.2" cy="831.5" r="1.500" fill="#4fae5c"/><rect x="1122.7" y="828.5999999999999" width="6.500" height="5.800" fill="#c9545d"/><rect x="1124.3" y="829.9" width="3.300" height="3.200" fill="#e79aa0"/><rect x="1089.7" y="836.7" width="41.5" height="8.300" fill="#111"/><rect x="1090.7" y="837.7" width="39.5" height="6.300" fill="#3b3b3b"/><rect x="1091.2" y="838.2" width="4" height="5.300" rx="1.500" fill="#9a9a9a"/><rect x="1096.2" y="838.7" width="16" height="4.300" fill="#1c1c1c"/><rect x="1113.2" y="838.2" width="8" height="5.300" fill="#2b2b2b"/><circle cx="1116.2" cy="840.9000000000001" r="1.500" fill="#4fae5c"/><rect x="1122.7" y="838.0" width="6.500" height="5.800" fill="#c9545d"/><rect x="1124.3" y="839.3000000000001" width="3.300" height="3.200" fill="#e79aa0"/><rect x="1089.7" y="846.1" width="41.5" height="8.300" fill="#111"/><rect x="1090.7" y="847.1" width="39.5" height="6.300" fill="#3b3b3b"/><rect x="1091.2" y="847.6" width="4" height="5.300" rx="1.500" fill="#9a9a9a"/><rect x="1096.2" y="848.1" width="16" height="4.300" fill="#1c1c1c"/><rect x="1113.2" y="847.6" width="8" height="5.300" fill="#2b2b2b"/><circle cx="1116.2" cy="850.3000000000001" r="1.500" fill="#4fae5c"/><rect x="1122.7" y="847.4" width="6.500" height="5.800" fill="#c9545d"/><rect x="1124.3" y="848.7" width="3.300" height="3.200" fill="#e79aa0"/><rect x="1085.800" y="816" width="3.600" height="41" fill="#5d5d5d"/><rect x="1133.500" y="814.700" width="40" height="43.800" fill="#1b1b1b"/><rect x="1135" y="816" width="37" height="41" fill="url(#vent)" opacity=".55"/><rect x="1139" y="819.500" width="27" height="10" fill="#232323"/><rect x="1141.0" y="821" width="2" height="2.500" fill="#777"/><rect x="1141.0" y="825.500" width="2.500" height="2" fill="#8a8a8a"/><rect x="1144.5" y="821" width="2" height="2.500" fill="#777"/><rect x="1144.5" y="825.500" width="2.500" height="2" fill="#8a8a8a"/><rect x="1148.0" y="821" width="2" height="2.500" fill="#5fbf6a"/><rect x="1148.0" y="825.500" width="2.500" height="2" fill="#8a8a8a"/><rect x="1151.5" y="821" width="2" height="2.500" fill="#5fbf6a"/><rect x="1151.5" y="825.500" width="2.500" height="2" fill="#8a8a8a"/><rect x="1155.0" y="821" width="2" height="2.500" fill="#5fbf6a"/><rect x="1155.0" y="825.500" width="2.500" height="2" fill="#8a8a8a"/><rect x="1158.5" y="821" width="2" height="2.500" fill="#5fbf6a"/><rect x="1158.5" y="825.500" width="2.500" height="2" fill="#8a8a8a"/><rect x="1162.0" y="821" width="2" height="2.500" fill="#5fbf6a"/><rect x="1162.0" y="825.500" width="2.500" height="2" fill="#8a8a8a"/><rect x="1139.500" y="833" width="26" height="8.500" fill="#2d2d2d"/><rect x="1140.5" y="834" width="2.300" height="6.500" fill="#bdbdbd"/><rect x="1143.6" y="834" width="2.300" height="6.500" fill="#bdbdbd"/><rect x="1146.7" y="834" width="2.300" height="6.500" fill="#bdbdbd"/><rect x="1149.8" y="834" width="2.300" height="6.500" fill="#bdbdbd"/><rect x="1152.9" y="834" width="2.300" height="6.500" fill="#bdbdbd"/><rect x="1156.0" y="834" width="2.300" height="6.500" fill="#bdbdbd"/><rect x="1159.1" y="834" width="2.300" height="6.500" fill="#bdbdbd"/><rect x="1162.2" y="834" width="2.300" height="6.500" fill="#bdbdbd"/><rect x="1141" y="830.500" width="22" height="1" fill="#999"/><rect x="1141" y="843" width="23" height="2.200" fill="#8a8a8a"/><rect x="1146" y="849" width="12" height="7" rx="1" fill="#0e0e0e"/><rect x="1147.500" y="853" width="9" height="1.200" fill="#999"/></g></svg>

<!-- right column -->
<div class="a" style="left:1558.600px;top:603px;width:42.400px;height:42px;background:#f1f2f6;border-radius:3px"></div>
<svg class="a" style="left:1572.500px;top:618.500px" width="16" height="11" viewBox="0 0 16 11" fill="#333"><rect x="0" y="0" width="2.600" height="1.900"/><rect x="4.600" y="0" width="11" height="1.900"/><rect x="0" y="4.500" width="2.600" height="1.900"/><rect x="4.600" y="4.500" width="11" height="1.900"/><rect x="0" y="9" width="2.600" height="1.900"/><rect x="4.600" y="9" width="11" height="1.900"/></svg>
<span id="pr1" class="t b" style="left:1321px;top:680.900px;font-size:18px;color:#222">от 3 703 ₽</span>
<span id="pr2" class="t" style="left:1419.700px;top:684px;font-size:13px;color:#7dbf8f">+ 3 703 ₽ ндс</span>
<div class="a" style="left:1321px;top:716.200px;width:137.800px;height:49.700px;background:#f1f2f6;border-radius:3px"></div>
<svg class="a" style="left:1321px;top:716px" width="138" height="50" viewBox="1321 716 138 50" stroke="#a4a4a4" stroke-width="1.500" fill="none"><path d="M1342 740H1354.500M1425.500 740H1437.500M1431.500 734V746"/></svg>
<span class="t" style="left:1385.500px;top:732.500px;font-size:14px;color:#444">1</span>

<div class="a grad" style="left:1469.400px;top:716.200px;width:131.600px;height:49.700px;border-radius:3px"></div>
<span id="cb" class="t b" style="left:1502px;top:733.800px;font-size:13.500px;color:#fff">В корзину</span>
<div class="a" style="left:1321px;top:776.900px;width:280px;height:61.100px;background:#f1f2f6;border-radius:3px"></div>
<svg class="a" style="left:1331px;top:786.500px" width="36" height="42" viewBox="1331 786.500 36 42">
  <path d="M1331.700 787.100H1354.500L1365.500 798V827.400H1331.700Z" fill="#3f5cd6"/>
  <path d="M1354.500 787.100L1365.500 798H1354.500Z" fill="#1d1d1d"/>
  <rect x="1339.500" y="802.600" width="15" height="1.700" fill="#fff"/><rect x="1339.500" y="808.200" width="11.500" height="1.700" fill="#fff"/><rect x="1339.500" y="813.600" width="6.500" height="1.700" fill="#fff"/>
  <circle cx="1357" cy="818.500" r="8.500" fill="#e0674e"/>
  <path d="M1357 814.500V819.300L1359 820.600" fill="none" stroke="#fff" stroke-width="1.500" stroke-linecap="round"/>
</svg>
<span id="kp" class="t" style="left:1387px;top:799px;font-size:15px;color:#333">Получить КП за 30 минут</span>
<div class="a" style="left:1387px;top:815px;width:175.300px;height:1px;background:#6a6a6a"></div>
<svg class="a" style="left:1566.500px;top:802.500px" width="7" height="10" viewBox="0 0 7 10"><path d="M1.500 1.500L5 5 1.500 8.500" fill="none" stroke="#4a63d9" stroke-width="1.400"/></svg>
<svg class="a" style="left:1319px;top:862px" width="22" height="20" viewBox="1319 862 22 20" fill="none" stroke="#3f5cd6" stroke-width="2" stroke-linejoin="round" stroke-linecap="round"><path d="M1323.600 876.200H1323.300a1.200 1.200 0 0 1-1-1.200V867a2 2 0 0 1 2-2H1331.500V869.300H1334.300C1336 869.300 1338.100 871.800 1338.100 873.600V875a1.200 1.200 0 0 1-1.200 1.200"/><path d="M1328.800 876.200H1331.800"/><circle cx="1326.200" cy="876.600" r="2.300" fill="#fff"/><circle cx="1334.300" cy="876.600" r="2.300" fill="#fff"/></svg>
<span id="dv1" class="t" style="left:1349.700px;top:861px;font-size:13.500px;color:#333">Доставка 5–10 недель под заказ,</span>
<span id="dv2" class="t" style="left:1349.700px;top:877px;font-size:13.500px;color:#333">доставка 3–10 дней со склада РФ</span>
<svg class="a" style="left:1320px;top:903px" width="20" height="20" viewBox="1320 903 20 20"><path d="M1330.100 906.300C1328 908 1325.700 908.900 1323.300 909.100C1322.900 915 1325.400 918.600 1330.100 920.200C1334.800 918.600 1337.300 915 1336.900 909.100C1334.500 908.900 1332.200 908 1330.100 906.300Z" fill="none" stroke="#3f5cd6" stroke-width="1.900" stroke-linejoin="round"/></svg>
<span id="gr" class="t" style="left:1349.700px;top:906.700px;font-size:13.500px;color:#333">Гарантия 36 месяцев</span>

<!-- FILTERS CARD -->
<div class="a" style="left:137px;top:685.200px;width:274px;height:290px;background:#fff;border-radius:5px"></div>
<span id="f1" class="t b" style="left:169px;top:715.800px;font-size:16px;color:#222">Фильтры</span>
<span id="f2" class="t" style="left:317.700px;top:717.500px;font-size:14px;color:#e0674e">Очистить</span>
<div class="hr" style="left:169px;top:743.600px;width:209.700px"></div>
<div class="a" style="left:169px;top:755.600px;width:45.400px;height:27.300px;background:#3f5cd6;border-radius:3px"></div>
<span id="f3" class="t" style="left:179.800px;top:762px;font-size:14px;color:#fff">Все</span>
<div class="a" style="left:219.900px;top:755.600px;width:42.200px;height:27.300px;background:#f1f2f6;border-radius:3px"></div>
<span id="f4" class="t" style="left:230.500px;top:762px;font-size:14px;color:#666">Б/у</span>
<div class="a" style="left:267.600px;top:755.600px;width:64.600px;height:27.300px;background:#f1f2f6;border-radius:3px"></div>
<span id="f5" class="t" style="left:278.500px;top:762px;font-size:14px;color:#666">Новый</span>
<div class="hr" style="left:169px;top:793.700px;width:209.700px"></div>
<span id="f6" class="t" style="left:169px;top:813px;font-size:14px;color:#333">Показать НДС</span>
<div class="a" style="left:345px;top:810.600px;width:34px;height:19.400px;background:#3f5cd6;border-radius:10px"></div>
<div class="a" style="left:362.300px;top:813px;width:14.600px;height:14.600px;background:#fff;border-radius:50%"></div>
<div class="hr" style="left:169px;top:845.600px;width:209.700px"></div>
<span id="f7" class="t" style="left:169px;top:865px;font-size:14px;color:#333">Бюджет</span>
<div class="a" style="left:169px;top:892.500px;width:102.500px;height:40.100px;background:#f1f2f6;border-radius:3px"></div>
<div class="a" style="left:276px;top:892.500px;width:103px;height:40.100px;background:#f1f2f6;border-radius:3px"></div>
<span id="f8" class="t" style="left:185px;top:905px;font-size:14px;color:#555">0</span>
<span id="f9" class="t" style="left:292.500px;top:905px;font-size:14px;color:#555">23 565</span>
<div class="a" style="left:177px;top:956.200px;width:202px;height:1.400px;background:#e3e5ec"></div>
<div class="a" style="left:177px;top:955.900px;width:119px;height:2px;background:#3f5cd6"></div>
<div class="a" style="left:169.200px;top:948.700px;width:16.400px;height:16.400px;border-radius:50%;background:#fff;border:2px solid #3f5cd6"></div>
<div class="a" style="left:287.900px;top:948.700px;width:16.400px;height:16.400px;border-radius:50%;background:#fff;border:2px solid #3f5cd6"></div>

</div></div>
</body>
</html>
